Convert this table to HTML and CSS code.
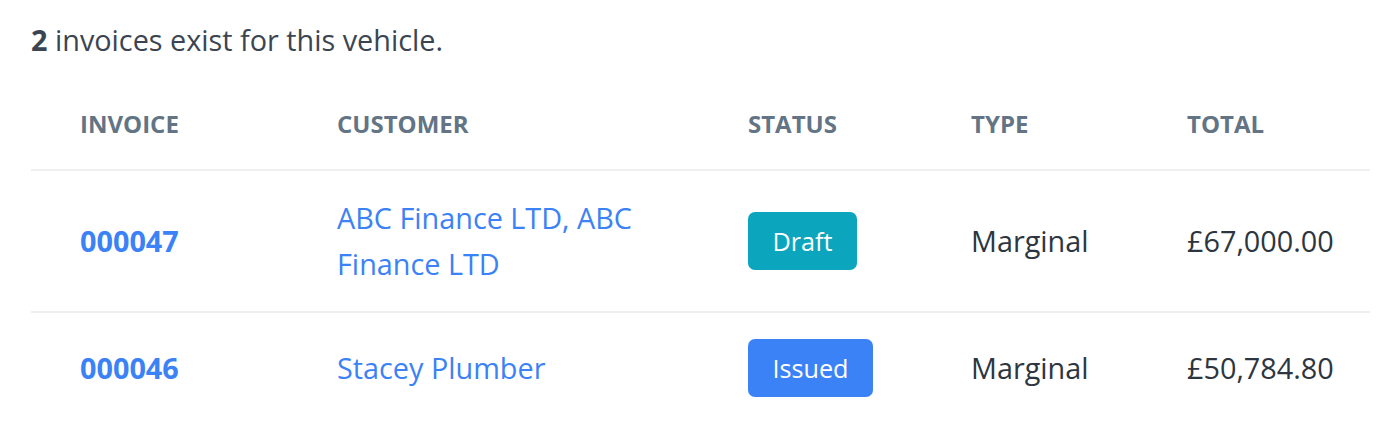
FILE: index.html
```html
<!DOCTYPE html>
<html lang="en">
<head>
<meta charset="utf-8">
<title>Invoices</title>
<link rel="stylesheet" href="styles.css">
</head>
<body>
<div class="page">
  <p class="intro"><strong>2</strong> invoices exist for this vehicle.</p>
  <div class="table">
    <div class="row head">
      <div class="cell">Invoice</div>
      <div class="cell">Customer</div>
      <div class="cell">Status</div>
      <div class="cell">Type</div>
      <div class="cell">Total</div>
    </div>
    <div class="row">
      <div class="cell"><a class="num" href="#">000047</a></div>
      <div class="cell cust"><a href="#">ABC Finance LTD, ABC Finance LTD</a></div>
      <div class="cell"><span class="badge draft">Draft</span></div>
      <div class="cell">Marginal</div>
      <div class="cell">£67,000.00</div>
    </div>
    <div class="row">
      <div class="cell"><a class="num" href="#">000046</a></div>
      <div class="cell cust"><a href="#">Stacey Plumber</a></div>
      <div class="cell"><span class="badge issued">Issued</span></div>
      <div class="cell">Marginal</div>
      <div class="cell">£50,784.80</div>
    </div>
  </div>
</div>
</body>
</html>
```
FILE: styles.css
```css
* { box-sizing: border-box; }
html, body { margin: 0; padding: 0; background: #fff; }
body {
  font-family: "Open Sans", "Noto Sans", sans-serif;
  font-size: 28.8px;
  line-height: 46px;
  color: #2d3640;
}
.page { padding: 17px 30px 0 31px; }
.intro { margin: 0 0 16px; color: #3b4552; }
.intro strong { font-weight: 700; }
.row {
  display: grid;
  grid-template-columns: 257px 411px 223px 216px 1fr;
  align-items: center;
  padding: 24px 0 24px 49px;
  border-bottom: 2px solid #efefef;
}
.row:last-child { border-bottom: none; padding-top: 26px; }
.row.head {
  padding: 24px 0 24px 49px;
  font-size: 24px;
  line-height: 42px;
  font-weight: 700;
  text-transform: uppercase;
  color: #637485;
}
a { color: #3b82f6; text-decoration: none; }
.num { font-weight: 700; }
.cust { padding-right: 50px; }
.badge {
  display: inline-block;
  color: #fff;
  font-size: 25.2px;
  line-height: 36px;
  padding: 11px 24.4px;
  border-radius: 7px;
}
.draft { background: #0ba6bd; }
.issued { background: #3b82f6; }
```
